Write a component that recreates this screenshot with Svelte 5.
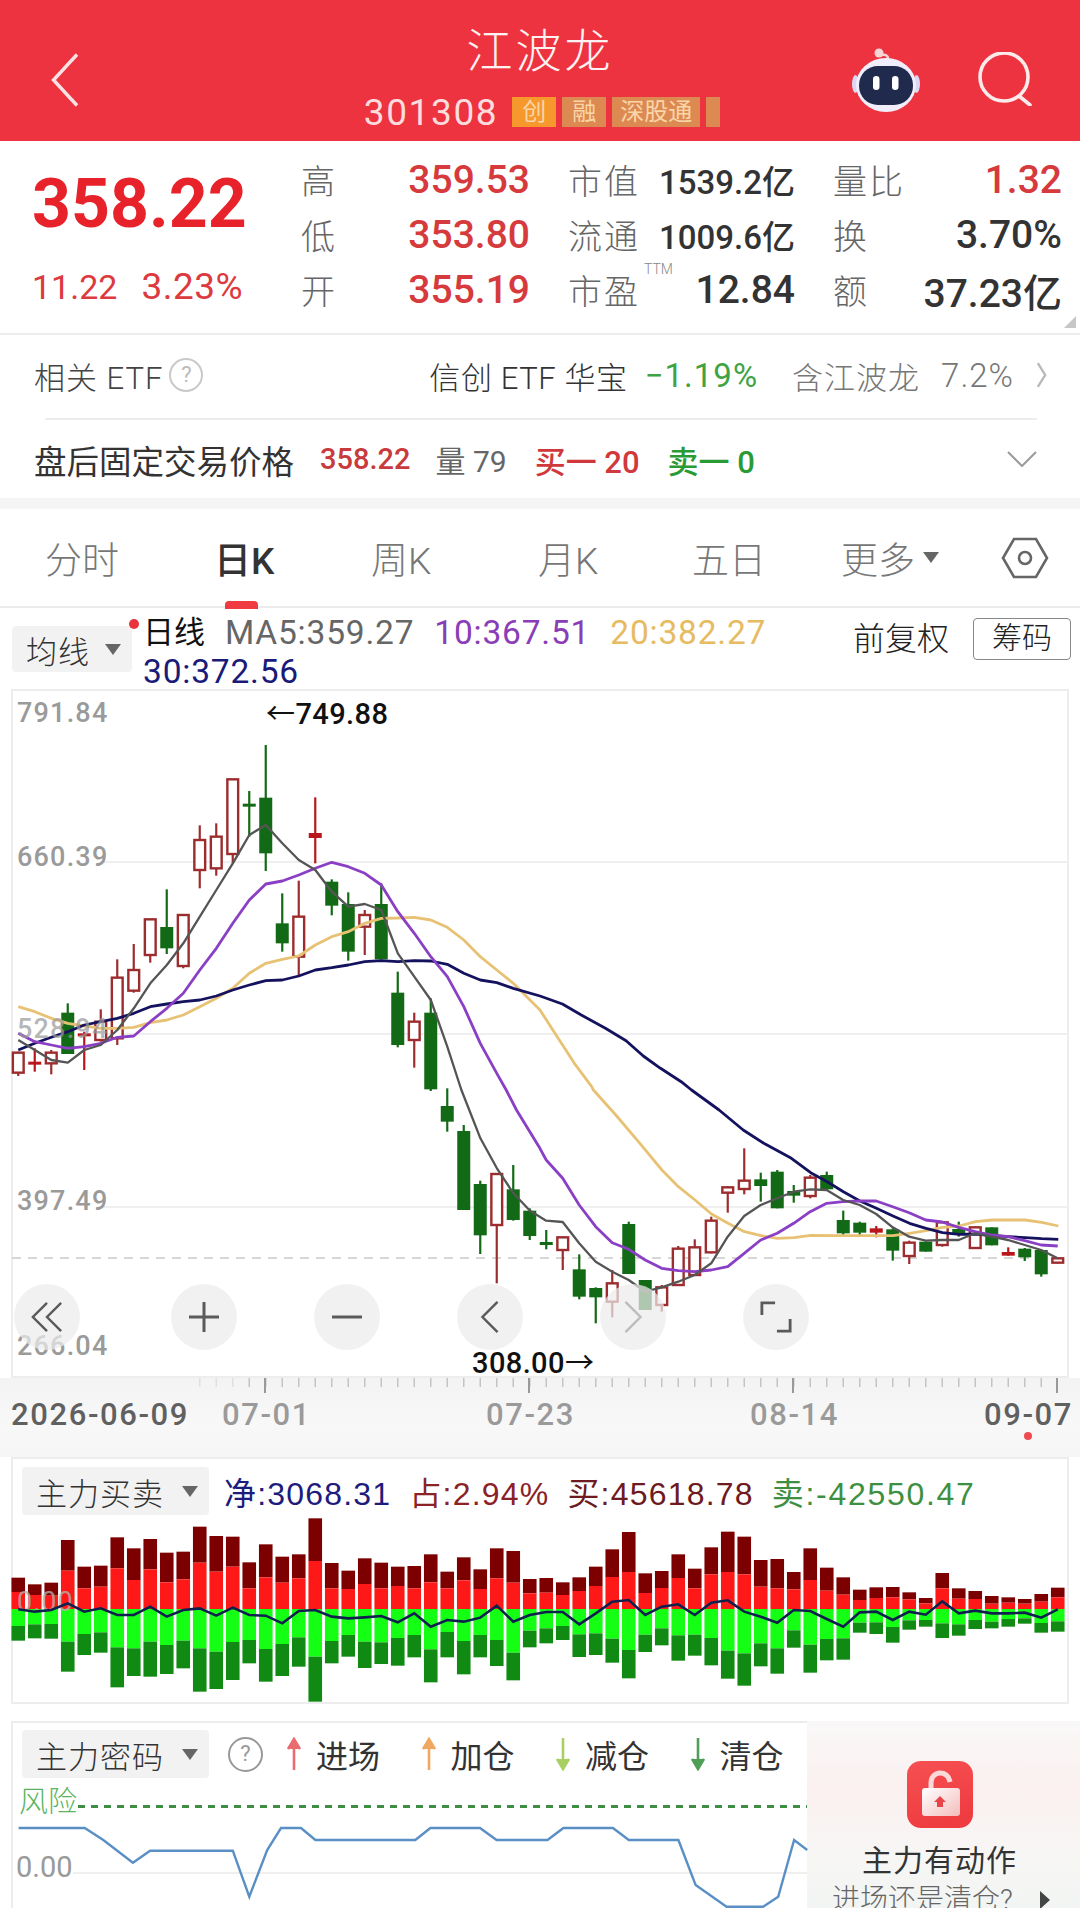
<script>
  const tabs = ['分时', '日K', '周K', '月K', '五日'];

  // candles: [high, top, bottom, low, kind]  r = hollow red, s = solid red, g = green
  // first 26 are measured from y 700, the rest from y 1090 (in thirds of a pixel)
  const rawA = [
    [1055,1058,1118,1128,'r'],[1045,1085,1090,1115,'s'],[1050,1058,1090,1123,'r'],[910,938,1062,1062,'g'],
    [995,1000,1006,1110,'s'],[928,965,1020,1025,'r'],[778,833,1015,1035,'r'],[732,810,872,878,'r'],
    [658,658,765,788,'r'],[568,681,745,762,'g'],[645,645,798,805,'r'],[376,420,510,565,'r'],
    [370,410,505,527,'r'],[238,238,462,490,'r'],[273,311,317,410,'g'],[135,293,460,513,'g'],
    [580,670,730,755,'g'],[542,650,770,830,'r'],[292,399,414,490,'s'],[538,545,617,646,'g'],
    [577,612,755,782,'g'],[630,645,680,765,'r'],[550,612,778,778,'g'],[815,878,1035,1042,'g'],
    [938,965,1020,1103,'r'],[895,938,1168,1173,'g']
  ];
  const rawB = [
    [-5,48,95,125,'g'],[105,123,360,360,'g'],[272,282,436,492,'g'],[252,252,405,580,'r'],
    [225,298,390,392,'g'],[355,362,438,450,'g'],[420,456,464,478,'g'],[440,442,480,540,'r'],
    [493,538,620,628,'g'],[592,594,622,700,'g'],[540,580,635,682,'r'],[395,402,552,552,'g'],
    [570,570,660,660,'g'],[585,592,645,665,'r'],[468,476,585,585,'r'],[448,472,555,555,'r'],
    [380,392,487,490,'r'],[288,292,308,368,'r'],[175,272,297,313,'r'],[248,268,288,335,'g'],
    [240,245,355,355,'g'],[285,303,317,338,'g'],[255,263,318,325,'r'],[245,255,298,300,'g'],
    [362,390,430,440,'g'],[395,398,428,436,'g'],[408,415,428,442,'s'],[415,418,482,512,'g'],
    [452,458,498,522,'r'],[455,455,485,485,'g'],[395,397,465,470,'r'],[395,417,435,440,'g'],
    [410,412,474,474,'r'],[412,412,466,466,'g'],[472,486,497,497,'s'],[474,476,502,513,'g'],
    [478,480,553,560,'g'],[503,505,518,520,'r']
  ];
  const gridX = (i) => 18.25 + 16.5 * i;
  const toCandle = (base) => (c) => ({
    h: base + c[0] / 3, t: base + c[1] / 3, b: base + c[2] / 3, l: base + c[3] / 3, kind: c[4]
  });
  const candles = [...rawA.map(toCandle(700)), ...rawB.map(toCandle(1090))];

  // moving averages, [x, y] in the zoom grid: page x = ox + x / 2.904, page y = oy + y / 3
  const path = (chunks) =>
    chunks
      .flatMap(([ox, oy, pts]) => pts.map(([x, y]) => `${(ox + x / 2.904).toFixed(1)},${(oy + y / 3).toFixed(1)}`))
      .join(' ');
  const onGrid = (x0, ys) => ys.map((y, i) => [x0 + 47.92 * i, y]);

  const ma5 = path([
    [0, 700, onGrid(53, [1020,1050,1080,1088,1050,1035,990,925,850,795,730,650,570,490,405,375,430,480,510,575,620,612,630,760,830,900,1040])],
    [0, 1090, [[1340,0],[1395,145],[1443,235],[1491,310],[1539,362]]],
    [540, 1090, onGrid(18, [392,396,460,515,545,570,605,592,575,555,520,440,378,345,325,305,298,300,330,345,372,412,440,452,450,450,430,440,450,465,480,505])]
  ]);
  const ma10 = path([
    [0, 700, onGrid(53, [1000,1025,1035,1045,1040,1030,1012,1008,965,925,880,810,745,670,600,552,543,525,505,487,500,520,555,635,700,770,830,920,1030,1120])],
    [0, 1090, [[1470,0],[1500,60],[1568,175]]],
    [540, 1090, onGrid(18, [210,265,345,410,458,478,510,535,542,545,540,530,490,450,430,400,365,340,335,333,333,350,368,390,396,412,425,435,440,452,465,468])]
  ]);
  const ma20 = path([
    [0, 700, onGrid(53, [920,935,955,970,978,985,985,982,968,960,945,920,895,865,820,790,778,768,735,710,695,670,655,654,652,660,682,720,770,810,850])],
    [540, 700, [[0,930],[50,1010],[100,1090],[150,1160]]],
    [540, 1090, [[155,0],[220,75],[290,160],[354,240],[402,290],[450,330],[498,372],[546,400],[594,425],[642,437],[690,445],[738,443],[786,436],[881,437],[977,437],[1025,437],[1073,430],[1121,422],[1169,412],[1217,408],[1265,395],[1313,390],[1361,390],[1409,390],[1457,397],[1505,408]]]
  ]);
  const ma30 = path([
    [0, 700, onGrid(53, [1050,1030,1012,995,975,965,955,940,920,912,905,900,888,870,855,842,840,828,810,803,795,785,782,785,782,783,793,820,840,848,865])],
    [540, 700, [[0,888],[65,912],[120,945],[190,985],[250,1022],[300,1068],[350,1105],[410,1145]]],
    [540, 1090, [[440,0],[520,60],[590,120],[650,160],[730,205],[786,248],[834,275],[881,305],[929,333],[977,355],[1025,378],[1073,400],[1121,415],[1169,428],[1217,433],[1265,432],[1313,437],[1361,440],[1409,443],[1457,446],[1505,448]]]
  ]);

  const ticks = Array.from({ length: 52 }, (_, i) => 199.75 + 16.5 * i);

  // main force bars: [dark red top, red top, green bottom, dark green bottom]
  const flow = [
    [413,456,558,602],[433,465,553,595],[428,467,552,596],[300,392,605,695],[380,445,582,645],[377,440,577,638],[292,385,622,742],[325,420,625,708],
    [297,388,605,710],[338,427,615,702],[335,418,602,685],[260,368,625,755],[288,395,635,747],[290,380,606,720],[367,445,600,670],[313,412,627,725],
    [350,428,612,708],[343,415,592,680],[235,363,650,785],[369,445,603,670],[392,447,585,650],[355,432,605,684],[368,445,607,672],[380,438,594,677],
    [378,445,585,652],[343,427,628,727],[395,445,576,652],[352,421,603,703],[388,447,585,652],[325,415,600,678],[333,428,638,721],[417,460,572,622],
    [414,458,565,610],[427,465,558,600],[412,453,583,651],[380,438,580,645],[328,411,596,668],[276,396,630,715],[400,459,584,636],[393,444,565,616],
    [343,414,586,662],[386,445,584,647],[322,403,594,676],[275,396,632,716],[290,403,640,737],[360,440,610,679],[357,445,625,701],[396,448,571,623],
    [325,420,614,698],[383,452,597,661],[412,464,595,659],[449,480,548,578],[442,474,547,582],[441,472,561,608],[457,478,541,569],[474,490,540,560],
    [399,445,550,594],[445,476,553,587],[453,477,540,567],[468,491,545,565],[472,488,537,560],[477,491,535,551],[462,485,549,578],[443,472,544,575]
  ];
  const netY = [
    508,515,510,490,515,505,525,525,500,530,510,505,527,503,525,527,550,513,510,530,535,532,528,547,520,560,540,545,533,497,545,525,
    516,516,553,520,485,480,525,500,493,525,488,481,515,530,548,510,513,537,560,517,515,540,515,524,484,520,512,520,520,518,533,508
  ];
  const fy = (v) => 1440 + v / 3;
  const netLine = netY.map((v, i) => `${gridX(i)},${fy(v)}`).join(' ');

  const risk = [
    [27,384],[123,384],[150,420],[193,488],[218,452],[338,452],[362,590],[388,450],[408,384],[437,384],[458,420],[603,420],[625,384],
    [697,384],[721,420],[795,420],[818,384],[890,384],[913,420],[985,420],[1010,555],[1055,620],[1108,620],[1130,590],[1153,420],[1172,450]
  ].map(([x, y]) => `${(x / 1.452).toFixed(1)},${(y / 3).toFixed(1)}`).join(' ');

  const legend = [
    { name: '进场', color: '#e96c70', up: true },
    { name: '加仓', color: '#f0a860', up: true },
    { name: '减仓', color: '#a9cf62', up: false },
    { name: '清仓', color: '#4f9f58', up: false }
  ];
</script>

<div class="page">
  <header class="top">
    <svg class="back" viewBox="0 0 28 54" fill="none" stroke="#fbe3e3" stroke-width="3.4">
      <path d="M26 1.5 2.5 27 26 52.5"/>
    </svg>
    <div class="title">
      <div class="name">江波龙</div>
      <div class="code">
        <span class="num">301308</span>
        <span class="tag first">创</span>
        <span class="tag second">融</span>
        <span class="tag">深股通</span>
        <span class="tag sliver"></span>
      </div>
    </div>
    <div class="top-icons">
      <svg class="robot" viewBox="0 0 68 66">
        <circle cx="27" cy="6" r="4.5" fill="#f7d5d5"/>
        <path d="M30 8c5-1 7 2 6 7" fill="none" stroke="#f7d5d5" stroke-width="2.4"/>
        <ellipse cx="3.5" cy="37" rx="3.5" ry="9" fill="#dcd6f2"/>
        <ellipse cx="64.5" cy="37" rx="3.5" ry="9" fill="#dcd6f2"/>
        <ellipse cx="34" cy="38" rx="30" ry="27" fill="#f1eefb"/>
        <rect x="7" y="19" width="54" height="39" rx="19" fill="#1f2a4d"/>
        <rect x="21" y="29" width="6.5" height="14" rx="3.2" fill="#fff"/>
        <rect x="40" y="29" width="6.5" height="14" rx="3.2" fill="#fff"/>
      </svg>
      <svg class="search" viewBox="0 0 56 54" fill="none" stroke="#fdeaea" stroke-width="3.6">
        <circle cx="27" cy="25" r="24"/>
        <path d="M42 44l11 9" stroke-linecap="round"/>
      </svg>
    </div>
  </header>

  <section class="quote">
    <div class="price">
      <div class="big">358.22</div>
      <div class="chg"><span>11.22</span><span class="chg-pct">3.23%</span></div>
    </div>
    <div class="stats">
      <div class="cell"><span class="k">高</span><span class="v red">359.53</span></div>
      <div class="cell"><span class="k">市值</span><span class="v2">1539.2亿</span></div>
      <div class="cell"><span class="k">量比</span><span class="v red">1.32</span></div>
      <div class="cell"><span class="k">低</span><span class="v red">353.80</span></div>
      <div class="cell"><span class="k">流通</span><span class="v2">1009.6亿</span></div>
      <div class="cell"><span class="k">换</span><span class="v dark">3.70%</span></div>
      <div class="cell"><span class="k">开</span><span class="v red">355.19</span></div>
      <div class="cell"><span class="k">市盈<sup>TTM</sup></span><span class="v dark">12.84</span></div>
      <div class="cell"><span class="k">额</span><span class="v dark">37.23亿</span></div>
    </div>
    <i class="corner"></i>
  </section>

  <section class="rows">
    <div class="row etf">
      <span class="etf-name">相关 ETF</span>
      <span class="help">?</span>
      <span class="spacer"></span>
      <span class="fund">信创 ETF 华宝</span>
      <span class="fund-chg">−1.19%</span>
      <span class="holds">含江波龙</span>
      <span class="holds pct">7.2%</span>
      <svg class="more" viewBox="0 0 12 30" fill="none" stroke="#b9b9b9" stroke-width="2.6"><path d="M2 2l8 13-8 13"/></svg>
    </div>
    <div class="row after">
      <span class="after-name">盘后固定交易价格</span>
      <span class="after-price">358.22</span>
      <span class="after-vol">量 79</span>
      <span class="after-buy">买一 20</span>
      <span class="after-sell">卖一 0</span>
      <span class="spacer"></span>
      <svg class="down" viewBox="0 0 30 16" fill="none" stroke="#9a9a9a" stroke-width="2"><path d="M1 1l14 14L29 1"/></svg>
    </div>
  </section>

  <nav class="tabs">
    {#each tabs as tab, i}
      <span class="tab" class:active={i === 1}>{tab}</span>
    {/each}
    <span class="tab more-tab">更多<i class="tri"></i></span>
    <svg class="hex" viewBox="0 0 48 42" fill="none" stroke="#666" stroke-width="2.6">
      <path d="M13 2h22l11 19-11 19H13L2 21z"/>
      <circle cx="24" cy="21" r="6"/>
    </svg>
  </nav>

  <section class="kline">
    <div class="ma-head">
      <div class="select wide">均线<i class="tri"></i><b class="dot"></b></div>
      <div class="ma-text">
        <span class="black">日线</span>
        <span class="m5">MA5:359.27</span>
        <span class="m10">10:367.51</span>
        <span class="m20">20:382.27</span>
        <span class="m30">30:372.56</span>
      </div>
      <div class="ma-right">
        <span class="adj">前复权</span>
        <span class="chips">筹码</span>
      </div>
    </div>

    <div class="chart">
      <svg class="plot" viewBox="0 689 1080 690" width="1080" height="690">
        <g stroke="#efefef" stroke-width="2">
          <line x1="100" x2="1069" y1="862" y2="862"/>
          <line x1="100" x2="1069" y1="1034" y2="1034"/>
          <line x1="100" x2="1069" y1="1207" y2="1207"/>
        </g>
        <line x1="12" x2="1068" y1="1258" y2="1258" stroke="#c9c9c9" stroke-width="1.5" stroke-dasharray="9 7"/>

        {#each candles as c, i}
          {@const x = gridX(i)}
          {@const color = c.kind === 'g' ? '#136a16' : c.kind === 's' ? '#b8161c' : '#9c2c2e'}
          <line x1={x} x2={x} y1={c.h} y2={c.l} stroke={color} stroke-width="2.2"/>
          {#if c.kind === 'g' || c.kind === 's'}
            <rect x={x - 6.5} y={c.t} width="13" height={Math.max(c.b - c.t, 3)} fill={color}/>
          {:else}
            <rect x={x - 5.4} y={c.t} width="10.8" height={c.b - c.t} fill="#fff" stroke={color} stroke-width="2.4"/>
          {/if}
        {/each}

        <polyline class="ma" points={ma20} stroke="#e8c274"/>
        <polyline class="ma" points={ma30} stroke="#14125e"/>
        <polyline class="ma" points={ma10} stroke="#8a3fc4"/>
        <polyline class="ma thin" points={ma5} stroke="#555"/>

        <text class="axis" x="17" y="722">791.84</text>
        <text class="axis" x="17" y="866">660.39</text>
        <text class="axis faint" x="17" y="1038">528.94</text>
        <text class="axis" x="17" y="1210">397.49</text>
        <text class="axis" x="17" y="1355">266.04</text>

        <text class="mark" x="266" y="724"><tspan class="arrow">←</tspan>749.88</text>
        <text class="mark" x="472" y="1373">308.00<tspan class="arrow">→</tspan></text>
      </svg>

      <div class="controls">
        <span class="ctl first-ctl">
          <svg viewBox="0 0 34 34" fill="none" stroke="#5a5a5a" stroke-width="2.6"><path d="M17 2 2 17l15 15M32 2 17 17l15 15"/></svg>
        </span>
        <span class="ctl">
          <svg viewBox="0 0 32 32" fill="none" stroke="#5a5a5a" stroke-width="3"><path d="M16 1v30M1 16h30"/></svg>
        </span>
        <span class="ctl">
          <svg viewBox="0 0 32 32" fill="none" stroke="#5a5a5a" stroke-width="3"><path d="M1 16h30"/></svg>
        </span>
        <span class="ctl">
          <svg viewBox="0 0 34 34" fill="none" stroke="#5a5a5a" stroke-width="2.6"><path d="M25 1 9 17l16 16"/></svg>
        </span>
        <span class="ctl">
          <svg viewBox="0 0 34 34" fill="none" stroke="#bdbdbd" stroke-width="2.6"><path d="M9 1l16 16L9 33"/></svg>
        </span>
        <span class="ctl">
          <svg viewBox="0 0 34 34" fill="none" stroke="#5a5a5a" stroke-width="3"><path d="M2 15V2h14M32 19v13H18"/></svg>
        </span>
      </div>
    </div>

    <div class="axis-strip">
      <svg class="ticks" viewBox="0 0 1080 18" width="1080" height="18">
        {#each ticks as x, i}
          <line x1={x} x2={x} y1="0" y2="9" stroke="#c4c4c4" stroke-width="1.5" opacity={i < 3 ? 0.4 : 1}/>
        {/each}
        <g stroke="#999" stroke-width="2">
          <line x1="265" x2="265" y1="0" y2="15"/>
          <line x1="529" x2="529" y1="0" y2="15"/>
          <line x1="793" x2="793" y1="0" y2="15"/>
          <line x1="1057" x2="1057" y1="0" y2="15"/>
        </g>
      </svg>
      <div class="dates">
        <span class="d-start">2026-06-09</span>
        <span class="d-a">07-01</span>
        <span class="d-b">07-23</span>
        <span class="d-c">08-14</span>
        <span class="d-end">09-07</span>
      </div>
      <i class="pin"></i>
    </div>
  </section>

  <section class="panel flow">
    <div class="flow-head">
      <div class="select">主力买卖<i class="tri"></i></div>
      <span class="f-net">净:3068.31</span>
      <span class="f-pct">占:2.94%</span>
      <span class="f-buy">买:45618.78</span>
      <span class="f-sell">卖:-42550.47</span>
    </div>
    <svg class="bars" viewBox="0 1516 1080 186" width="1080" height="186">
      {#each flow as b, i}
        {@const x = gridX(i) - 6.8}
        <rect x={x} y={fy(b[0])} width="13.6" height={fy(b[1]) - fy(b[0])} fill="#7c0000"/>
        <rect x={x} y={fy(b[1])} width="13.6" height={fy(507) - fy(b[1])} fill="#ff1818"/>
        <rect x={x} y={fy(507)} width="13.6" height={fy(b[2]) - fy(507)} fill="#14ff14"/>
        <rect x={x} y={fy(b[2])} width="13.6" height={fy(b[3]) - fy(b[2])} fill="#108a12"/>
      {/each}
      <text class="zero" x="17" y="1611">0.00</text>
      <polyline points={netLine} fill="none" stroke="#10204e" stroke-width="2.6"/>
    </svg>
  </section>

  <section class="panel signal">
    <div class="signal-main">
      <div class="signal-head">
        <div class="select">主力密码<i class="tri"></i></div>
        <span class="q">?</span>
        {#each legend as item}
          <span class="legend">
            <svg viewBox="0 0 14 34" fill="none" stroke={item.color} stroke-width="2.6">
              {#if item.up}
                <path d="M7 33V2M1 12l6-10 6 10" fill={item.color}/>
              {:else}
                <path d="M7 1v31M1 22l6 10 6-10" fill={item.color}/>
              {/if}
            </svg>
            {item.name}
          </span>
        {/each}
      </div>
      <div class="risk-chart">
        <span class="risk-label">风险</span>
        <span class="risk-dash"></span>
        <span class="zero-line"></span>
        <span class="zero-label">0.00</span>
        <svg class="risk-line" viewBox="0 0 810 208" width="810" height="208" fill="none">
          <polyline points={risk} stroke="#5a8fc6" stroke-width="2.4"/>
        </svg>
      </div>
    </div>
    <aside class="promo">
      <svg class="lock" viewBox="0 0 66 67">
        <defs>
          <linearGradient id="lockbg" x1="0" y1="0" x2="0.3" y2="1">
            <stop offset="0" stop-color="#f65052"/>
            <stop offset="1" stop-color="#ef3c40"/>
          </linearGradient>
          <linearGradient id="lockbody" x1="0" y1="0" x2="1" y2="1">
            <stop offset="0" stop-color="#ffffff"/>
            <stop offset="1" stop-color="#f4bcbc"/>
          </linearGradient>
        </defs>
        <rect width="66" height="67" rx="14" fill="url(#lockbg)"/>
        <path d="M24 28v-6c0-6 4-10 9-10 6 0 9 4 10 9" fill="none" stroke="#fbd9d9" stroke-width="5"/>
        <rect x="15" y="27" width="38" height="28" rx="3" fill="url(#lockbody)"/>
        <path d="M33 35l6 6h-3v5h-6v-5h-3z" fill="#e9434a"/>
      </svg>
      <div class="promo-title">主力有动作</div>
      <div class="promo-sub">进场还是清仓?<i class="play"></i></div>
    </aside>
  </section>
</div>

<style>
  :global(body) {
    margin: 0;
    background: #fff;
  }

  .page {
    width: 1080px;
    height: 1908px;
    overflow: hidden;
    background: #fff;
    font-family: Roboto, "Noto Sans CJK SC", sans-serif;
    color: #333;
  }

  .top {
    height: 141px;
    background: #ee3340;
    display: grid;
    grid-template-columns: 1fr auto 1fr;
    align-items: start;
    padding: 0 47px 0 51px;
    box-sizing: border-box;
  }

  .back {
    width: 28px;
    height: 54px;
    margin-top: 53px;
  }

  .title {
    display: flex;
    flex-direction: column;
    align-items: center;
  }

  .name {
    font-family: "Noto Sans CJK SC", sans-serif;
    font-size: 46px;
    line-height: 56px;
    margin-top: 19px;
    margin-left: -4px;
    color: #fdf1f1;
    letter-spacing: 3px;
    font-weight: 300;
  }

  .code {
    display: flex;
    align-items: center;
    gap: 6px;
    margin-top: 22px;
    height: 30px;
  }

  .num {
    font-family: Roboto, sans-serif;
    font-size: 37px;
    letter-spacing: 1.6px;
    color: #fbdcdc;
    margin-right: 8px;
    font-weight: 400;
  }

  .tag {
    height: 30px;
    line-height: 30px;
    padding: 0 8px;
    background: #dd8a52;
    color: #f9d6a8;
    font-size: 24px;
  }

  .tag.first {
    background: #f6982c;
    padding: 0 10px;
  }

  .tag.second {
    padding: 0 10px;
  }

  .tag.sliver {
    width: 14px;
    padding: 0;
  }

  .top-icons {
    display: flex;
    justify-content: flex-end;
    align-items: flex-start;
    gap: 57px;
    margin-top: 47px;
  }

  .robot {
    width: 68px;
    height: 66px;
  }

  .search {
    width: 56px;
    height: 54px;
    margin-top: 5px;
  }

  .quote {
    position: relative;
    height: 192px;
    border-bottom: 2px solid #ececec;
    display: flex;
    padding-left: 32px;
  }

  .price {
    width: 269px;
    flex: none;
  }

  .big {
    font-size: 68px;
    font-weight: 700;
    line-height: 84px;
    margin-top: 21px;
    color: #e8222a;
  }

  .chg {
    display: flex;
    align-items: baseline;
    gap: 24px;
    font-size: 34px;
    line-height: 40px;
    margin-top: 21px;
    color: #dc3a3e;
  }

  .chg-pct {
    font-size: 37px;
    letter-spacing: .5px;
  }

  .stats {
    width: 760px;
    display: grid;
    grid-template-columns: 229px 227px 229px;
    column-gap: 38px;
    grid-auto-rows: 55px;
    padding-top: 11px;
  }

  .cell {
    display: flex;
    justify-content: space-between;
    align-items: center;
    white-space: nowrap;
  }

  .k {
    position: relative;
    font-family: "Noto Sans CJK SC", sans-serif;
    font-size: 34px;
    color: #666;
    letter-spacing: 2px;
    font-weight: 300;
  }

  .k sup {
    position: absolute;
    left: 76px;
    top: -4px;
    font-size: 14px;
    letter-spacing: 0;
    font-family: Roboto, sans-serif;
    color: #888;
  }

  .v {
    font-size: 39px;
    font-weight: 500;
  }

  .v2 {
    font-size: 33px;
    font-weight: 500;
    color: #333;
  }

  .red {
    color: #d63a3c;
  }

  .dark {
    color: #333;
  }

  .corner {
    position: absolute;
    right: 4px;
    bottom: 5px;
    width: 0;
    height: 0;
    border-left: 12px solid transparent;
    border-bottom: 12px solid #c7c7c7;
  }

  .rows {
    padding: 0 33px 0 34px;
    border-bottom: 11px solid #f5f5f5;
  }

  .row {
    display: flex;
    align-items: center;
    white-space: nowrap;
  }

  .spacer {
    flex: 1;
  }

  .etf {
    position: relative;
    height: 80px;
    padding-bottom: 5px;
  }

  .etf::after {
    content: '';
    position: absolute;
    left: 11px;
    right: 10px;
    bottom: 0;
    height: 2px;
    background: #ededed;
  }

  .etf-name {
    font-size: 31px;
    color: #444;
    font-weight: 300;
    letter-spacing: 1px;
  }

  .help,
  .q {
    width: 30px;
    height: 30px;
    border: 2px solid #c9c9c9;
    border-radius: 50%;
    color: #bbb;
    font-size: 22px;
    text-align: center;
    line-height: 30px;
    margin-left: 6px;
  }

  .fund {
    font-size: 31px;
    color: #333;
    font-weight: 300;
    letter-spacing: .6px;
  }

  .fund-chg {
    font-size: 33px;
    color: #3fa344;
    margin-left: 17px;
    letter-spacing: 1px;
  }

  .holds {
    font-size: 31px;
    color: #777;
    margin-left: 34px;
    font-weight: 300;
    letter-spacing: 1px;
  }

  .holds.pct {
    font-size: 33px;
    margin-left: 21px;
  }

  .more {
    width: 11px;
    height: 30px;
    margin-left: 22px;
  }

  .after {
    height: 78px;
  }

  .after-name {
    font-size: 32.5px;
    color: #333;
    width: 286px;
    font-weight: 400;
  }

  .after-price {
    font-size: 29px;
    color: #c93a3c;
    font-weight: 500;
  }

  .after-vol {
    font-size: 30px;
    color: #666;
    margin-left: 25px;
  }

  .after-buy {
    font-size: 31px;
    color: #d0383c;
    font-weight: 500;
    margin-left: 28px;
  }

  .after-sell {
    font-size: 31px;
    color: #2a9a34;
    font-weight: 500;
    margin-left: 28px;
  }

  .down {
    width: 30px;
    height: 16px;
    margin-right: 10px;
  }

  .tabs {
    position: relative;
    height: 97px;
    border-bottom: 2px solid #ececec;
    display: grid;
    grid-template-columns: 169px 157px 167px 154px 149px 160px auto;
    align-items: center;
    padding-left: 45px;
  }

  .tab {
    font-size: 37px;
    color: #777;
    font-weight: 300;
    white-space: nowrap;
  }

  .tab.active {
    color: #333;
    font-weight: 500;
    position: relative;
  }

  .tab.active::after {
    content: '';
    position: absolute;
    left: 11px;
    top: 70px;
    width: 33px;
    height: 8px;
    border-radius: 4px 4px 0 0;
    background: #ee3a40;
  }

  .more-tab {
    display: flex;
    align-items: center;
    gap: 8px;
  }

  .tri {
    display: inline-block;
    flex: none;
    width: 0;
    height: 0;
    border-left: 8px solid transparent;
    border-right: 8px solid transparent;
    border-top: 11px solid #666;
  }

  .hex {
    width: 48px;
    height: 42px;
  }

  .ma-head {
    display: flex;
    height: 81px;
    padding: 8px 9px 0 12px;
    box-sizing: border-box;
    position: relative;
  }

  .select {
    display: flex;
    flex: none;
    align-items: center;
    justify-content: space-between;
    box-sizing: border-box;
    width: 187px;
    height: 48px;
    padding: 0 11px 0 14px;
    border-radius: 4px;
    background: #f2f2f2;
    font-size: 31px;
    color: #333;
    font-weight: 300;
    letter-spacing: 1px;
    white-space: nowrap;
  }

  .select.wide {
    width: 120px;
    height: 46px;
    margin-top: 10px;
    position: relative;
  }

  .dot {
    position: absolute;
    left: 117px;
    top: -7px;
    width: 10px;
    height: 10px;
    border-radius: 50%;
    background: #e8323c;
  }

  .ma-text {
    width: 690px;
    padding-left: 11px;
    display: flex;
    flex-wrap: wrap;
    column-gap: 20px;
    font-size: 33.5px;
    letter-spacing: .8px;
    line-height: 39px;
    margin-top: -3px;
    align-content: flex-start;
    white-space: nowrap;
    flex: none;
  }

  .black {
    color: #111;
    font-size: 31px;
    letter-spacing: 0;
  }

  .m5 {
    color: #666;
  }

  .m10 {
    color: #8a3db6;
  }

  .m20 {
    color: #e6bb62;
  }

  .m30 {
    color: #1b1a78;
    flex-basis: 100%;
  }

  .ma-right {
    flex: 1;
    display: flex;
    justify-content: flex-end;
    align-items: flex-start;
    gap: 24px;
    margin-top: 2px;
    white-space: nowrap;
  }

  .adj {
    font-size: 32px;
    color: #222;
    line-height: 42px;
    font-weight: 300;
  }

  .chips {
    width: 96px;
    height: 40px;
    line-height: 38px;
    text-align: center;
    border: 1px solid #888;
    border-radius: 4px;
    font-size: 30px;
    color: #222;
    font-weight: 300;
  }

  .chart {
    position: relative;
    width: 1058px;
    height: 689px;
    margin-left: 11px;
    border: 2px solid #ededed;
    box-sizing: border-box;
  }

  .plot {
    position: absolute;
    left: -13px;
    top: -2px;
    display: block;
    overflow: visible;
  }

  .axis {
    font-family: Roboto, sans-serif;
    font-size: 27px;
    fill: #9a9a9a;
    letter-spacing: 1.2px;
    font-weight: 500;
  }

  .axis.faint {
    fill-opacity: .72;
  }

  .mark {
    font-family: Roboto, sans-serif;
    font-size: 29px;
    font-weight: 500;
    letter-spacing: .4px;
    fill: #111;
  }

  .arrow {
    font-family: "Noto Sans CJK SC", sans-serif;
    font-weight: 400;
  }

  .ma {
    fill: none;
    stroke-width: 2.8;
    stroke-linejoin: round;
  }

  .ma.thin {
    stroke-width: 2.3;
  }

  .controls {
    position: absolute;
    left: 1px;
    top: 593px;
    display: flex;
    gap: 77px;
  }

  .ctl {
    width: 66px;
    height: 66px;
    border-radius: 50%;
    background: rgba(235, 235, 235, .72);
    display: flex;
    align-items: center;
    justify-content: center;
  }

  .first-ctl {
    margin-right: 14px;
  }

  .ctl svg {
    width: 32px;
    height: 32px;
  }

  .axis-strip {
    position: relative;
    height: 79px;
    background: linear-gradient(#f3f3f3, #f8f8f8 60%, #f5f5f5);
  }

  .ticks {
    display: block;
  }

  .dates {
    position: relative;
    display: grid;
    grid-template-columns: 222px 253px 264px 234px auto;
    padding-left: 11px;
    font-size: 31px;
    font-weight: 500;
    color: #9a9a9a;
    letter-spacing: 1.6px;
    line-height: 36px;
    white-space: nowrap;
    margin-top: 1px;
  }

  .d-start,
  .d-end {
    color: #606060;
  }

  .d-a {
    margin-left: -11px;
  }

  .pin {
    position: absolute;
    left: 1024px;
    top: 54px;
    width: 8px;
    height: 8px;
    border-radius: 50%;
    background: #ee4a50;
  }

  .panel {
    position: relative;
    margin-left: 11px;
    width: 1058px;
    border: 2px solid #ededed;
    box-sizing: border-box;
  }

  .flow {
    height: 247px;
    margin-bottom: 17px;
  }

  .flow-head {
    display: flex;
    align-items: center;
    padding: 8px 0 0 9px;
    height: 48px;
    font-size: 32px;
    letter-spacing: 1.2px;
    white-space: nowrap;
    box-sizing: content-box;
  }

  .f-net,
  .f-pct,
  .f-buy,
  .f-sell {
    font-family: "Liberation Sans", "Noto Sans CJK SC", sans-serif;
  }

  .f-net {
    color: #1d1c7c;
    margin-left: 15px;
  }

  .f-pct {
    color: #8b2226;
    margin-left: 18px;
  }

  .f-buy {
    color: #6d1a20;
    margin-left: 18px;
  }

  .f-sell {
    color: #3f8f42;
    margin-left: 18px;
    letter-spacing: 1.7px;
  }

  .bars {
    position: absolute;
    left: -13px;
    top: 57px;
    display: block;
  }

  .zero {
    font-size: 27px;
    fill: #b0b0b0;
    fill-opacity: .8;
    letter-spacing: 1px;
  }

  .signal {
    height: 190px;
    display: flex;
    border-bottom: none;
    border-right: none;
    width: 1069px;
  }

  .signal-main {
    width: 794px;
    flex: none;
    position: relative;
  }

  .signal-head {
    display: flex;
    align-items: center;
    padding: 7px 0 2px 9px;
    height: 48px;
    white-space: nowrap;
    box-sizing: content-box;
  }

  .q {
    color: #999;
    border-color: #999;
    width: 31px;
    height: 31px;
    margin-left: 19px;
    flex: none;
  }

  .legend {
    display: flex;
    align-items: center;
    gap: 15px;
    font-size: 32px;
    color: #333;
    width: 134.5px;
    flex: none;
    font-weight: 400;
    letter-spacing: 0;
  }

  .legend svg {
    width: 14px;
    height: 34px;
    flex: none;
  }

  .q + .legend {
    margin-left: 24px;
  }

  .risk-chart {
    position: relative;
  }

  .risk-label {
    position: absolute;
    left: 6px;
    top: 4px;
    font-size: 29px;
    line-height: 36px;
    color: #58b45e;
    font-weight: 300;
  }

  .risk-dash {
    position: absolute;
    left: 65px;
    right: 0;
    top: 25px;
    height: 3px;
    background: repeating-linear-gradient(90deg, #3f8c44 0 7px, transparent 7px 13px);
  }

  .zero-line {
    position: absolute;
    left: 60px;
    right: 0;
    top: 92px;
    border-top: 2px solid #efefef;
  }

  .zero-label {
    position: absolute;
    left: 3px;
    top: 71px;
    font-size: 29px;
    line-height: 32px;
    color: #999;
  }

  .risk-line {
    position: absolute;
    left: -13px;
    top: -80px;
  }

  .promo {
    flex: 1;
    background: linear-gradient(180deg, #f9f8f8 0%, #fbf0f0 35%, #f7f6f5 70%, #f2f5f3 100%);
    display: flex;
    flex-direction: column;
    align-items: center;
    padding-top: 40px;
    padding-right: 8px;
    margin-top: -2px;
  }

  .lock {
    width: 66px;
    height: 67px;
    flex: none;
  }

  .promo-title {
    font-size: 30px;
    line-height: 40px;
    color: #333;
    margin-top: 13px;
    letter-spacing: 1px;
    font-weight: 400;
    white-space: nowrap;
  }

  .promo-sub {
    align-self: flex-start;
    font-size: 28px;
    line-height: 38px;
    color: #666;
    white-space: nowrap;
    display: flex;
    align-items: center;
    gap: 27px;
    margin-left: 25px;
    font-weight: 300;
  }

  .play {
    width: 0;
    height: 0;
    border-top: 9px solid transparent;
    border-bottom: 9px solid transparent;
    border-left: 10px solid #444;
  }
</style>
